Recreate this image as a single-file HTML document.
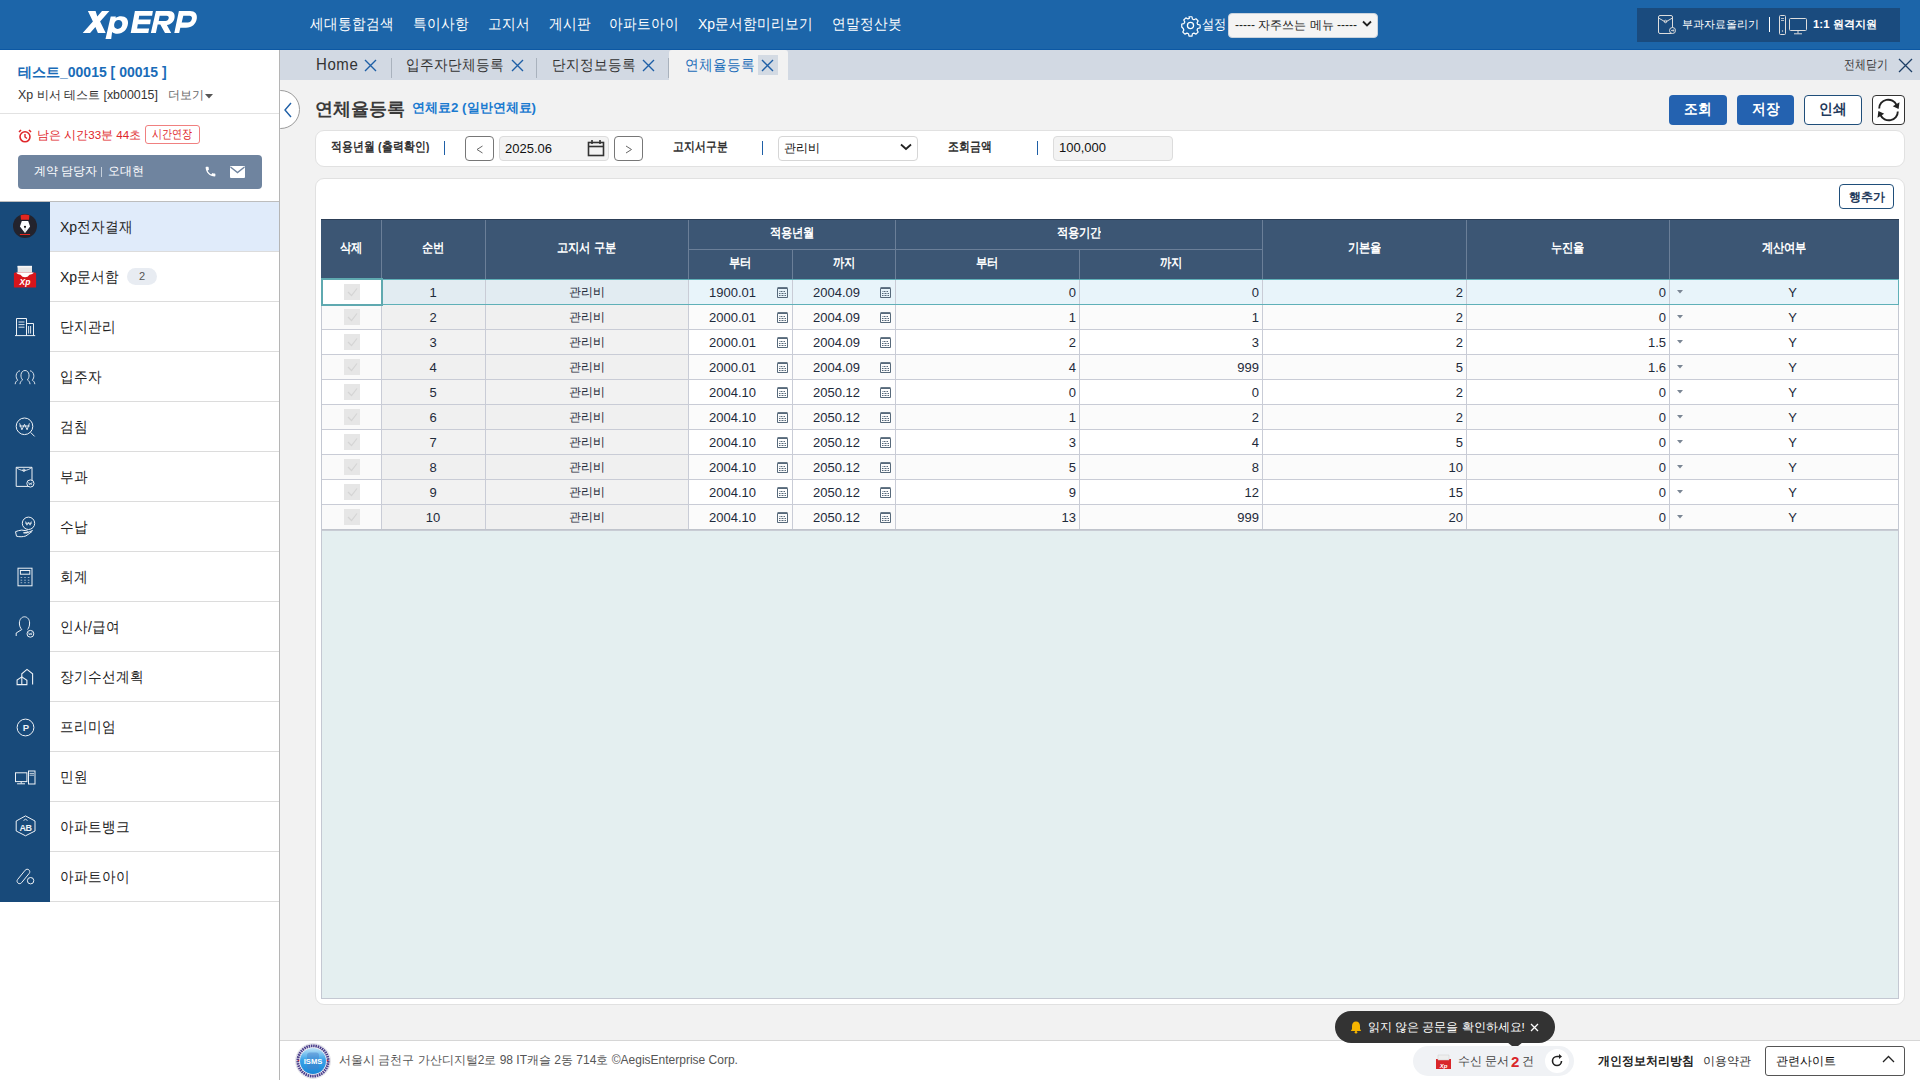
<!DOCTYPE html><html><head><meta charset="utf-8"><title>XpERP</title><style>
*{box-sizing:border-box;margin:0;padding:0}
html,body{width:1920px;height:1080px;overflow:hidden;background:#f2f2f2;font-family:"Liberation Sans", sans-serif;color:#222}
.a{position:absolute}
.t{position:absolute;white-space:nowrap;line-height:1}
.k{transform:scaleY(1.1);transform-origin:50% 90%}
.k2{transform:scaleY(1.2);transform-origin:50% 10%}
svg{position:absolute;overflow:visible}
</style></head><body>
<div class="a" style="left:0;top:0;width:1920px;height:50px;background:#1c65a9;border-bottom:1px solid #0c58a4"></div>
<svg style="left:0;top:0" width="280" height="50"><g fill="#fff" fill-rule="evenodd"><path d="M87.9,11 L95.6,11 L97.3,16.5 L102,11 L109.4,11 L100.1,21.5 L105.7,33 L97.9,33 L95.4,26.9 L90.1,33 L82.7,33 L92.9,21.5 Z"/><path d="M110.7,16.5 L115.9,16.5 L115.6,18 C117,16.8 119,16.3 121,16.3 C126,16.3 128.5,19.5 128,23.5 C127.3,29.5 123,33.8 117.5,33.8 C115,33.8 113.2,33 112.1,32 L111.2,39 L105.5,39 Z M118.5,20.1 C121,20.1 122.5,21.8 122.3,24.2 C122,27 120,28.9 117.7,28.9 C115.3,28.9 113.9,27.2 114.1,24.8 C114.4,22 116.2,20.1 118.5,20.1 Z"/><path d="M134.9,11 L152.9,11 L152.1,15.7 L139.2,15.7 L138.6,19.6 L150.8,19.6 L150.1,24.2 L137.8,24.2 L137.1,28.5 L149.1,28.5 L148.3,33 L130.7,33 Z"/><path d="M155.9,11 L169,11 C173.5,11 175.2,14 174.5,18 C173.8,22 171,24.5 166.9,25 L171.2,33 L165,33 L160.3,24.6 L157.7,24.6 L155.9,33 L150.85,33 Z M159.7,15.7 L166.5,15.7 C168.3,15.7 169,16.8 168.7,18.2 C168.4,19.8 167.2,20.9 165.5,20.9 L158.7,20.9 Z"/><path d="M178.9,11 L190,11 C195,11 197.5,14 196.8,18.5 C196,24 192,27.7 186,27.7 L180.3,27.7 L179.2,33 L174.3,33 Z M183.3,15.7 L189.5,15.7 C191.5,15.7 192.2,17 191.9,18.8 C191.5,21 190,22.6 187.8,22.6 L181.7,22.6 Z"/></g></svg>
<div class="t k" style="left:310px;top:17px;font-size:14px;color:#fff;width:83px">세대통합검색</div>
<div class="t k" style="left:413px;top:17px;font-size:14px;color:#fff;width:54px">특이사항</div>
<div class="t k" style="left:488px;top:17px;font-size:14px;color:#fff;width:41px">고지서</div>
<div class="t k" style="left:549px;top:17px;font-size:14px;color:#fff;width:41px">게시판</div>
<div class="t k" style="left:609px;top:17px;font-size:14px;color:#fff;width:69px">아파트아이</div>
<div class="t k" style="left:698px;top:17px;font-size:14px;color:#fff;width:114px">Xp문서함미리보기</div>
<div class="t k" style="left:832px;top:17px;font-size:14px;color:#fff;width:69px">연말정산봇</div>
<svg style="left:1180px;top:15px" width="21" height="21" viewBox="0 0 24 24"><path d="M12 8.5a3.5 3.5 0 1 0 0 7a3.5 3.5 0 1 0 0-7z" fill="none" stroke="#fff" stroke-width="1.5"/><path d="M10.3 2h3.4l.5 2.6 1.7.9 2.4-1.2 2.4 2.4-1.2 2.4.7 1.7 2.8.6v3.4l-2.8.6-.7 1.7 1.2 2.4-2.4 2.4-2.4-1.2-1.7.7-.5 2.8h-3.4l-.6-2.8-1.7-.7-2.4 1.2-2.4-2.4 1.2-2.4-.7-1.7L2 13.7v-3.4l2.6-.5.9-1.7-1.2-2.4 2.4-2.4 2.4 1.2 1.7-.9z" fill="none" stroke="#fff" stroke-width="1.4" stroke-linejoin="round"/></svg>
<div class="t" style="left:1202px;top:18px;font-size:12px;color:#fff;transform:scaleY(1.15)">설정</div>
<div class="a" style="left:1228px;top:13px;width:150px;height:25px;background:#f4f4f4;border-radius:4px;border:1px solid #c9d3de"></div>
<div class="t" style="left:1235px;top:19px;font-size:12px;color:#222">----- 자주쓰는 메뉴 -----</div>
<svg style="left:1362px;top:20px" width="10" height="8"><path d="M1 1.5 L5 5.5 L9 1.5" fill="none" stroke="#222" stroke-width="1.8"/></svg>
<div class="a" style="left:1637px;top:8px;width:263px;height:34px;background:#1a4b7e"></div>
<svg style="left:1658px;top:15px" width="20" height="20" viewBox="0 0 20 20"><rect x="0.5" y="0.5" width="14" height="18" rx="1.5" fill="none" stroke="#ddd" stroke-width="1"/><path d="M0.5 3 L7.5 7 L14.5 3" fill="none" stroke="#ddd" stroke-width="1"/><circle cx="7.5" cy="6.5" r="1.3" fill="none" stroke="#ddd" stroke-width=".8"/><circle cx="14.5" cy="15.5" r="3" fill="#1a4b7e" stroke="#ddd" stroke-width="1"/><path d="M13 15.5h3M15 14.3l1 1.2-1 1.2" fill="none" stroke="#ddd" stroke-width=".8"/></svg>
<div class="t" style="left:1682px;top:19px;font-size:11.2px;color:#fff">부과자료올리기</div>
<div class="a" style="left:1769px;top:17px;width:1px;height:15px;background:#fff"></div>
<svg style="left:1779px;top:15px" width="30" height="20" viewBox="0 0 30 20"><rect x="0.5" y="0.5" width="6" height="19" rx="1" fill="none" stroke="#ddd"/><path d="M2 3.5h3M2 5.5h3" stroke="#ddd" stroke-width=".8"/><circle cx="3.5" cy="16" r=".7" fill="#ddd"/><rect x="10.5" y="3.5" width="17" height="12" rx="1" fill="none" stroke="#ddd"/><path d="M19 15.5v3M15 18.8h8" stroke="#ddd"/></svg>
<div class="t" style="left:1813px;top:19px;font-size:11.4px;font-weight:bold;color:#fff">1:1 원격지원</div>
<div class="a" style="left:0;top:50px;width:280px;height:1030px;background:#fff;border-right:1px solid #b5b5b5"></div>
<div class="t" style="left:18px;top:65px;font-size:14px;font-weight:bold;color:#1a6cb8">테스트_00015 [ 00015 ]</div>
<div class="t" style="left:18px;top:89px;font-size:12.4px;color:#333">Xp 비서 테스트 [xb00015]</div>
<div class="t" style="left:168px;top:89px;font-size:12px;color:#666">더보기</div>
<svg style="left:205px;top:94px" width="8" height="5"><path d="M0 0h8L4 4.5z" fill="#555"/></svg>
<div class="a" style="left:0;top:113px;width:279px;height:1px;background:#e2e2e2"></div>
<svg style="left:18px;top:129px" width="14" height="14" viewBox="0 0 14 14"><circle cx="7" cy="7.8" r="5" fill="none" stroke="#e0262a" stroke-width="1.6"/><path d="M7 5v3l2 1.5" fill="none" stroke="#e0262a" stroke-width="1.4"/><path d="M1 3 L3 1 M13 3 L11 1" stroke="#e0262a" stroke-width="1.6"/></svg>
<div class="t" style="left:37px;top:129px;font-size:11.6px;color:#e0262a">남은 시간33분 44초</div>
<div class="a" style="left:145px;top:125px;width:55px;height:19px;border:1px solid #f08080;border-radius:3px;background:#fff"></div>
<div class="t" style="left:152px;top:129px;font-size:10.2px;color:#e0262a;transform:scaleY(1.2)">시간연장</div>
<div class="a" style="left:18px;top:155px;width:244px;height:34px;background:#6f849f;border-radius:4px"></div>
<div class="t" style="left:34px;top:165px;font-size:12px;color:#fff">계약 담당자</div>
<div class="a" style="left:101px;top:167px;width:1px;height:10px;background:#c5cfdb"></div>
<div class="t" style="left:108px;top:165px;font-size:12px;color:#fff">오대현</div>
<svg style="left:204px;top:165px" width="13" height="13" viewBox="0 0 24 24"><path d="M6.6 10.8c1.4 2.8 3.8 5.1 6.6 6.6l2.2-2.2c.3-.3.7-.4 1-.2 1.1.4 2.3.6 3.6.6.6 0 1 .4 1 1V20c0 .6-.4 1-1 1C10.6 21 3 13.4 3 4c0-.6.4-1 1-1h3.5c.6 0 1 .4 1 1 0 1.3.2 2.5.6 3.6.1.3 0 .7-.2 1z" fill="#fff"/></svg>
<svg style="left:230px;top:166px" width="15" height="12" viewBox="0 0 15 12"><rect x="0" y="0" width="15" height="12" rx="1" fill="#fff"/><path d="M0.5 1 L7.5 6.5 L14.5 1" fill="none" stroke="#6f849f" stroke-width="1.4"/></svg>
<div class="a" style="left:0;top:201px;width:279px;height:1px;background:#bdbdbd"></div>
<div class="a" style="left:0;top:202px;width:50px;height:700px;background:#184a7a"></div>
<div class="a" style="left:50px;top:202px;width:229px;height:50px;background:#e0ebfa;border-bottom:1px solid #dcdcdc"></div>
<div class="t k" style="left:60px;top:220px;font-size:14px;color:#222">Xp전자결재</div>
<div class="a" style="left:50px;top:252px;width:229px;height:50px;background:#fff;border-bottom:1px solid #dcdcdc"></div>
<div class="t k" style="left:60px;top:270px;font-size:14px;color:#222">Xp문서함</div>
<div class="a" style="left:50px;top:302px;width:229px;height:50px;background:#fff;border-bottom:1px solid #dcdcdc"></div>
<div class="t k" style="left:60px;top:320px;font-size:14px;color:#222">단지관리</div>
<div class="a" style="left:50px;top:352px;width:229px;height:50px;background:#fff;border-bottom:1px solid #dcdcdc"></div>
<div class="t k" style="left:60px;top:370px;font-size:14px;color:#222">입주자</div>
<div class="a" style="left:50px;top:402px;width:229px;height:50px;background:#fff;border-bottom:1px solid #dcdcdc"></div>
<div class="t k" style="left:60px;top:420px;font-size:14px;color:#222">검침</div>
<div class="a" style="left:50px;top:452px;width:229px;height:50px;background:#fff;border-bottom:1px solid #dcdcdc"></div>
<div class="t k" style="left:60px;top:470px;font-size:14px;color:#222">부과</div>
<div class="a" style="left:50px;top:502px;width:229px;height:50px;background:#fff;border-bottom:1px solid #dcdcdc"></div>
<div class="t k" style="left:60px;top:520px;font-size:14px;color:#222">수납</div>
<div class="a" style="left:50px;top:552px;width:229px;height:50px;background:#fff;border-bottom:1px solid #dcdcdc"></div>
<div class="t k" style="left:60px;top:570px;font-size:14px;color:#222">회계</div>
<div class="a" style="left:50px;top:602px;width:229px;height:50px;background:#fff;border-bottom:1px solid #dcdcdc"></div>
<div class="t k" style="left:60px;top:620px;font-size:14px;color:#222">인사/급여</div>
<div class="a" style="left:50px;top:652px;width:229px;height:50px;background:#fff;border-bottom:1px solid #dcdcdc"></div>
<div class="t k" style="left:60px;top:670px;font-size:14px;color:#222">장기수선계획</div>
<div class="a" style="left:50px;top:702px;width:229px;height:50px;background:#fff;border-bottom:1px solid #dcdcdc"></div>
<div class="t k" style="left:60px;top:720px;font-size:14px;color:#222">프리미엄</div>
<div class="a" style="left:50px;top:752px;width:229px;height:50px;background:#fff;border-bottom:1px solid #dcdcdc"></div>
<div class="t k" style="left:60px;top:770px;font-size:14px;color:#222">민원</div>
<div class="a" style="left:50px;top:802px;width:229px;height:50px;background:#fff;border-bottom:1px solid #dcdcdc"></div>
<div class="t k" style="left:60px;top:820px;font-size:14px;color:#222">아파트뱅크</div>
<div class="a" style="left:50px;top:852px;width:229px;height:50px;background:#fff;border-bottom:1px solid #dcdcdc"></div>
<div class="t k" style="left:60px;top:870px;font-size:14px;color:#222">아파트아이</div>
<div class="t" style="left:127px;top:268px;width:30px;height:17px;background:#e8ecf2;border-radius:9px;font-size:11px;color:#555;text-align:center;line-height:17px">2</div>
<svg style="left:0;top:202px" width="50" height="50"><circle cx="25" cy="23.9" r="12" fill="#23232d"/><path d="M20.6 13.2 Q25 11.6 29.4 13.2 L29 17.8 L21 17.8z" fill="#e3261f"/><path d="M21.8 19h6.4l1.9 5.5-5.1 6.5-5.1-6.5z" fill="#fff"/><path d="M25 25v5.5" stroke="#bbb" stroke-width=".8"/><circle cx="25" cy="24.8" r="1.1" fill="#111"/><rect x="19.9" y="32" width="10.2" height="1" fill="#e3261f"/></svg>
<svg style="left:0;top:252px" width="50" height="50"><rect x="17.6" y="13.9" width="14.4" height="7" fill="#e6e6e6"/><rect x="17.6" y="13.9" width="14.4" height="1.6" fill="#f6f6f6"/><path d="M13.9 21.5 Q14 20.4 15.5 20.4 H34.5 Q36 20.4 36.1 21.5 V35 Q36.1 35.6 35.5 35.6 H14.5 Q13.9 35.6 13.9 35z" fill="#d7151b"/><path d="M16.5 20.4 H33.5 V21 Q33 22.2 29.5 22.8 Q27.8 25.3 25 25.3 Q22.2 25.3 20.5 22.8 Q17 22.2 16.5 21z" fill="#fff"/><text x="25" y="33" font-size="8.5" font-weight="bold" font-style="italic" fill="#fff" text-anchor="middle" font-family="Liberation Sans">Xp</text></svg>
<svg style="left:0;top:302px" width="50" height="50"><g fill="none" stroke="#eef2f6" stroke-width="1"><path d="M16.5 33.5V16.5h10v17"/><path d="M26.5 21.5h7v12"/><path d="M15 33.6h20.2"/><path d="M18.5 20h6M18.5 22.6h6M18.5 25.2h6" stroke-width=".9"/><path d="M28.6 24v7.6M30.6 24v7.6" stroke-width=".9"/></g></svg>
<svg style="left:0;top:352px" width="50" height="50"><g fill="none" stroke="#eef2f6" stroke-width=".9"><path d="M20 32.2c0-2 1.3-3.5 2.6-4.3-1.2-1.3-1.8-3.2-1.6-5.2.3-2.6 1.9-4.2 4-4.2s3.7 1.6 4 4.2c.2 2-.4 3.9-1.6 5.2 1.3.8 2.6 2.3 2.6 4.3"/><path d="M15.2 32.2c0-2 1.2-3.2 2.5-4-1.1-1.3-1.7-3-1.5-5 .3-2.4 1.8-4.2 3.8-4.4"/><path d="M34.8 32.2c0-2-1.2-3.2-2.5-4 1.1-1.3 1.7-3 1.5-5-.3-2.4-1.8-4.2-3.8-4.4"/></g></svg>
<svg style="left:0;top:402px" width="50" height="50"><g fill="none" stroke="#eef2f6" stroke-width="1"><circle cx="24.5" cy="24.3" r="8.3"/><path d="M30.6 30.4l4 4"/><path d="M19.6 21.3l2.3 6.5 2.6-5.5 2.6 5.5 2.3-6.5M19.3 24h10.4" stroke-width=".9"/></g></svg>
<svg style="left:0;top:452px" width="50" height="50"><g fill="none" stroke="#eef2f6" stroke-width="1"><path d="M16.2 15.3h15.8v19.1h-15.8z"/><path d="M16.2 15.5c2 1.5 4.5 3 7.7 3s5.8-1.5 8.1-3" stroke-width=".9"/><circle cx="23.9" cy="18.3" r="1.2" stroke-width=".8"/><circle cx="30.4" cy="31.5" r="3.6" fill="#174a7a"/><path d="M28.6 30.2l.8 2.6.9-1.8.9 1.8.8-2.6" stroke-width=".7"/></g></svg>
<svg style="left:0;top:502px" width="50" height="50"><g fill="none" stroke="#eef2f6" stroke-width="1"><circle cx="28.5" cy="21.3" r="6.2"/><path d="M25.6 19.5l1.3 3.7 1.6-2.8 1.6 2.8 1.3-3.7M25.3 21.2h6.4" stroke-width=".8"/><path d="M15.5 29.7c1.8-.8 4-1.4 6.2-1.6l5.5.8c1 .2 1 1.4 0 1.6l-3.7.3 3.4.2 5.8-2.6M15.5 29.7l1 4.5c3 .8 6.2.8 9.5-.3l6.2-4.5"/></g></svg>
<svg style="left:0;top:552px" width="50" height="50"><g fill="none" stroke="#eef2f6" stroke-width="1"><rect x="18" y="16.2" width="14" height="17.6"/><rect x="20.4" y="18.5" width="9.4" height="3.7"/></g><g fill="#9fb3c8"><rect x="20.6" y="25" width="1.6" height="1"/><rect x="24.2" y="25" width="1.6" height="1"/><rect x="27.8" y="25" width="1.6" height="1"/><rect x="20.6" y="27.7" width="1.6" height="1"/><rect x="24.2" y="27.7" width="1.6" height="1"/><rect x="27.8" y="27.7" width="1.6" height="1"/><rect x="20.6" y="30.2" width="1.6" height="1"/><rect x="24.2" y="30.2" width="1.6" height="1"/><rect x="27.8" y="30.2" width="1.6" height="1"/></g></svg>
<svg style="left:0;top:602px" width="50" height="50"><g fill="none" stroke="#eef2f6" stroke-width="1"><path d="M16.2 34v-3l5.6-3.5c-1.5-1.5-2.4-3.5-2.4-6.5 0-3.5 2.2-6.2 5.1-6.2s5.1 2.7 5.1 6.2c0 2.8-.8 5-2 6.5"/><circle cx="30.4" cy="31.8" r="3.4"/><path d="M28.6 30.5l.8 2.5.9-1.7.9 1.7.8-2.5" stroke-width=".7"/></g></svg>
<svg style="left:0;top:652px" width="50" height="50"><g fill="none" stroke="#eef2f6" stroke-width="1.1"><path d="M32.6 32.6V21.8L27 17.4l-5.2 4.4v3.6"/><path d="M17.1 32.6v-4.6l4.7-3.2 5.1 3.4v4.4z"/><path d="M21.8 25v7.6"/></g></svg>
<svg style="left:0;top:702px" width="50" height="50"><circle cx="25.5" cy="25.5" r="8.4" fill="none" stroke="#eef2f6" stroke-width="1"/><text x="26" y="29.3" font-size="9.5" font-weight="bold" fill="#eef2f6" text-anchor="middle" font-family="Liberation Sans">P</text></svg>
<svg style="left:0;top:752px" width="50" height="50"><g fill="none" stroke="#eef2f6" stroke-width="1"><rect x="15.5" y="20.8" width="11.4" height="8.8"/><path d="M21.2 29.6v2M17.1 31.8h7.9"/><rect x="28.5" y="19" width="6.5" height="13"/><path d="M29.5 21.4h4.5M29.5 23.2h4.5" stroke-width=".8"/></g></svg>
<svg style="left:0;top:802px" width="50" height="50"><g fill="none" stroke="#eef2f6" stroke-width="1"><path d="M25.5 13.9l9.5 5.1v10l-9.5 4.8-9.3-4.8v-10z"/><path d="M23.5 18.5l2-1.3 2 1.3" stroke-width=".9"/></g><text x="25.5" y="29" font-size="9" font-weight="bold" fill="#eef2f6" text-anchor="middle" font-family="Liberation Sans" letter-spacing="-.5">AB</text></svg>
<svg style="left:0;top:852px" width="50" height="50"><g fill="none" stroke="#eef2f6" stroke-width="1"><path d="M17.6 27.5l7.6-9.3c.9-1.1 2.5-1.3 3.6-.4 1.1.9 1.3 2.5.4 3.6l-7.6 9.3c-.9 1.1-2.5 1.3-3.6.4-1.1-.9-1.3-2.5-.4-3.6z"/><circle cx="30.6" cy="28.7" r="3.2"/></g></svg>
<div class="a" style="left:280px;top:50px;width:1640px;height:30px;background:#d2d9e3"></div>
<div class="t k" style="left:316px;top:58px;font-size:14px;color:#333;font-size:15px;letter-spacing:.6px;top:57px">Home</div>
<svg style="left:364px;top:59px" width="13" height="13"><path d="M1 1L12 12M12 1L1 12" stroke="#1e5fa6" stroke-width="1.4"/></svg>
<div class="a" style="left:391px;top:58px;width:1px;height:20px;background:#a9b2bd"></div>
<div class="t k" style="left:406px;top:58px;font-size:14px;color:#333">입주자단체등록</div>
<svg style="left:511px;top:59px" width="13" height="13"><path d="M1 1L12 12M12 1L1 12" stroke="#1e5fa6" stroke-width="1.4"/></svg>
<div class="a" style="left:536px;top:58px;width:1px;height:20px;background:#a9b2bd"></div>
<div class="t k" style="left:552px;top:58px;font-size:14px;color:#333">단지정보등록</div>
<svg style="left:642px;top:59px" width="13" height="13"><path d="M1 1L12 12M12 1L1 12" stroke="#1e5fa6" stroke-width="1.4"/></svg>
<div class="a" style="left:668px;top:58px;width:1px;height:20px;background:#a9b2bd"></div>
<div class="a" style="left:669px;top:50px;width:119px;height:30px;background:#f2f2f2;border-radius:3px 3px 0 0"></div>
<div class="t k" style="left:685px;top:58px;font-size:14px;color:#1a6cb8">연체율등록</div>
<div class="a" style="left:758px;top:55px;width:20px;height:20px;background:#d3dae3"></div>
<svg style="left:761px;top:59px" width="13" height="13"><path d="M1 1L12 12M12 1L1 12" stroke="#1e5fa6" stroke-width="1.4"/></svg>
<div class="t" style="left:1844px;top:59px;font-size:11px;color:#333;transform:scaleY(1.2)">전체닫기</div>
<svg style="left:1898px;top:58px" width="15" height="15"><path d="M1 1L14 14M14 1L1 14" stroke="#1e3f66" stroke-width="1.3"/></svg>
<div class="a" style="left:261px;top:90px;width:39px;height:39px;border-radius:50%;border:1px solid #9a9a9a;background:#fff;clip-path:inset(0 0 0 19px)"></div>
<svg style="left:283px;top:102px" width="10" height="16"><path d="M8 1L2 8l6 7" fill="none" stroke="#1e5fa6" stroke-width="1.4"/></svg>
<div class="t" style="left:315px;top:100px;font-size:18px;font-weight:bold;color:#3a3a3a">연체율등록</div>
<div class="t" style="left:412px;top:101px;font-size:13.3px;font-weight:bold;color:#1a7ad0">연체료2 (일반연체료)</div>
<div class="a" style="left:1669px;top:95px;width:58px;height:30px;background:#2462b0;border-radius:4px"></div>
<div class="t" style="left:1669px;top:103px;width:58px;text-align:center;font-size:13.5px;font-weight:bold;color:#fff;transform:scaleY(1.1)">조회</div>
<div class="a" style="left:1737px;top:95px;width:57px;height:30px;background:#2462b0;border-radius:4px"></div>
<div class="t" style="left:1737px;top:103px;width:57px;text-align:center;font-size:13.5px;font-weight:bold;color:#fff;transform:scaleY(1.1)">저장</div>
<div class="a" style="left:1804px;top:95px;width:58px;height:30px;background:#fff;border:1px solid #1f4e7a;border-radius:4px"></div>
<div class="t" style="left:1804px;top:103px;width:58px;text-align:center;font-size:13.5px;font-weight:bold;color:#1f3a5c;transform:scaleY(1.1)">인쇄</div>
<div class="a" style="left:1872px;top:95px;width:33px;height:30px;background:#fff;border:1px solid #333;border-radius:4px"></div>
<svg style="left:1876px;top:99px" width="25" height="22" viewBox="0 0 25 22"><path d="M3.2 9.5A9 8.6 0 0 1 20.5 6" fill="none" stroke="#222" stroke-width="1.9"/><path d="M21.8 12.5A9 8.6 0 0 1 4.5 16" fill="none" stroke="#222" stroke-width="1.9"/><path d="M23.5 3.2L22.6 10 16.8 7.2z" fill="#222"/><path d="M1.5 18.8L2.4 12 8.2 14.8z" fill="#222"/></svg>
<div class="a" style="left:315px;top:130px;width:1590px;height:37px;background:#fff;border:1px solid #e1e1e1;border-radius:9px"></div>
<div class="t k2" style="left:331px;top:140px;font-size:11px;font-weight:bold;color:#333">적용년월 (출력확인)</div>
<div class="a" style="left:444px;top:141px;width:1px;height:14px;background:#1e5fa6"></div>
<div class="a" style="left:762px;top:141px;width:1px;height:14px;background:#1e5fa6"></div>
<div class="a" style="left:1037px;top:141px;width:1px;height:14px;background:#1e5fa6"></div>
<div class="a" style="left:465px;top:136px;width:29px;height:25px;background:#fff;border:1px solid #777;border-radius:4px"></div>
<svg style="left:476px;top:145px" width="8" height="9"><path d="M6.5 1L1 4.5l5.5 3.5" fill="none" stroke="#666" stroke-width="1"/></svg>
<div class="a" style="left:499px;top:136px;width:110px;height:25px;background:#f3f3f3;border:1px solid #dcdcdc;border-radius:4px"></div>
<div class="t" style="left:505px;top:142px;font-size:13px;color:#111">2025.06</div>
<svg style="left:587px;top:139px" width="18" height="18" viewBox="0 0 18 18"><rect x="1.5" y="3.5" width="15" height="13" fill="none" stroke="#333" stroke-width="1.6"/><path d="M1.5 7.5h15" stroke="#333" stroke-width="1.6"/><path d="M5 1v4M13 1v4" stroke="#333" stroke-width="1.6"/></svg>
<div class="a" style="left:614px;top:136px;width:29px;height:25px;background:#fff;border:1px solid #777;border-radius:4px"></div>
<svg style="left:625px;top:145px" width="8" height="9"><path d="M1 1l5.5 3.5L1 8" fill="none" stroke="#666" stroke-width="1"/></svg>
<div class="t k2" style="left:673px;top:140px;font-size:11.2px;font-weight:bold;color:#333">고지서구분</div>
<div class="a" style="left:778px;top:136px;width:140px;height:25px;background:#fff;border:1px solid #d6d6d6;border-radius:4px"></div>
<div class="t" style="left:784px;top:142px;font-size:12px;color:#111">관리비</div>
<svg style="left:900px;top:143px" width="12" height="8"><path d="M1 1.5l5 4.5 5-4.5" fill="none" stroke="#222" stroke-width="1.8"/></svg>
<div class="t k2" style="left:948px;top:140px;font-size:11.2px;font-weight:bold;color:#333">조회금액</div>
<div class="a" style="left:1053px;top:136px;width:120px;height:25px;background:#f3f3f3;border:1px solid #dcdcdc;border-radius:4px"></div>
<div class="t" style="left:1059px;top:141px;font-size:13px;color:#111">100,000</div>
<div class="a" style="left:315px;top:178px;width:1590px;height:827px;background:#fff;border:1px solid #e1e1e1;border-radius:9px"></div>
<div class="a" style="left:1839px;top:184px;width:55px;height:25px;background:#fff;border:1px solid #1f4e7a;border-radius:4px"></div>
<div class="t" style="left:1839px;top:191px;width:55px;text-align:center;font-size:12px;font-weight:bold;color:#1f3a5c">행추가</div>
<div class="a" style="left:321px;top:219px;width:1578px;height:780px;background:#e4eff0;border:1px solid #c4c8d2"></div>
<div class="a" style="left:321px;top:219px;width:1578px;height:60px;background:#3c5674;border-top:1px solid #2c3e56"></div>
<div class="a" style="left:381px;top:220px;width:1px;height:59px;background:#6b7f98"></div>
<div class="a" style="left:485px;top:220px;width:1px;height:59px;background:#6b7f98"></div>
<div class="a" style="left:688px;top:220px;width:1px;height:59px;background:#6b7f98"></div>
<div class="a" style="left:895px;top:220px;width:1px;height:59px;background:#6b7f98"></div>
<div class="a" style="left:1262px;top:220px;width:1px;height:59px;background:#6b7f98"></div>
<div class="a" style="left:1466px;top:220px;width:1px;height:59px;background:#6b7f98"></div>
<div class="a" style="left:1669px;top:220px;width:1px;height:59px;background:#6b7f98"></div>
<div class="a" style="left:792px;top:249px;width:1px;height:30px;background:#6b7f98"></div>
<div class="a" style="left:1079px;top:249px;width:1px;height:30px;background:#6b7f98"></div>
<div class="a" style="left:688px;top:249px;width:574px;height:1px;background:#6b7f98"></div>
<div class="t" style="left:321px;top:243px;width:60px;text-align:center;font-size:11.4px;font-weight:bold;color:#fff;transform:scaleY(1.15)">삭제</div>
<div class="t" style="left:381px;top:243px;width:104px;text-align:center;font-size:11.4px;font-weight:bold;color:#fff;transform:scaleY(1.15)">순번</div>
<div class="t" style="left:485px;top:243px;width:203px;text-align:center;font-size:11.4px;font-weight:bold;color:#fff;transform:scaleY(1.15)">고지서 구분</div>
<div class="t" style="left:688px;top:228px;width:207px;text-align:center;font-size:11.4px;font-weight:bold;color:#fff;transform:scaleY(1.15)">적용년월</div>
<div class="t" style="left:688px;top:258px;width:104px;text-align:center;font-size:11.4px;font-weight:bold;color:#fff;transform:scaleY(1.15)">부터</div>
<div class="t" style="left:792px;top:258px;width:103px;text-align:center;font-size:11.4px;font-weight:bold;color:#fff;transform:scaleY(1.15)">까지</div>
<div class="t" style="left:895px;top:228px;width:367px;text-align:center;font-size:11.4px;font-weight:bold;color:#fff;transform:scaleY(1.15)">적용기간</div>
<div class="t" style="left:895px;top:258px;width:184px;text-align:center;font-size:11.4px;font-weight:bold;color:#fff;transform:scaleY(1.15)">부터</div>
<div class="t" style="left:1079px;top:258px;width:183px;text-align:center;font-size:11.4px;font-weight:bold;color:#fff;transform:scaleY(1.15)">까지</div>
<div class="t" style="left:1262px;top:243px;width:204px;text-align:center;font-size:11.4px;font-weight:bold;color:#fff;transform:scaleY(1.15)">기본율</div>
<div class="t" style="left:1466px;top:243px;width:203px;text-align:center;font-size:11.4px;font-weight:bold;color:#fff;transform:scaleY(1.15)">누진율</div>
<div class="t" style="left:1669px;top:243px;width:229px;text-align:center;font-size:11.4px;font-weight:bold;color:#fff;transform:scaleY(1.15)">계산여부</div>
<div class="a" style="left:322px;top:280px;width:59px;height:24px;background:#ffffff"></div>
<div class="a" style="left:382px;top:280px;width:306px;height:24px;background:#e2ecf2"></div>
<div class="a" style="left:689px;top:280px;width:1209px;height:24px;background:#e8f4fa"></div>
<div class="a" style="left:322px;top:304px;width:1576px;height:1px;background:#c9ccd6"></div>
<div class="a" style="left:322px;top:305px;width:59px;height:24px;background:#fafafa"></div>
<div class="a" style="left:382px;top:305px;width:306px;height:24px;background:#f0f0f0"></div>
<div class="a" style="left:689px;top:305px;width:1209px;height:24px;background:#fbfbfb"></div>
<div class="a" style="left:322px;top:329px;width:1576px;height:1px;background:#c9ccd6"></div>
<div class="a" style="left:322px;top:330px;width:59px;height:24px;background:#ffffff"></div>
<div class="a" style="left:382px;top:330px;width:306px;height:24px;background:#f2f2f2"></div>
<div class="a" style="left:689px;top:330px;width:1209px;height:24px;background:#ffffff"></div>
<div class="a" style="left:322px;top:354px;width:1576px;height:1px;background:#c9ccd6"></div>
<div class="a" style="left:322px;top:355px;width:59px;height:24px;background:#fafafa"></div>
<div class="a" style="left:382px;top:355px;width:306px;height:24px;background:#f0f0f0"></div>
<div class="a" style="left:689px;top:355px;width:1209px;height:24px;background:#fbfbfb"></div>
<div class="a" style="left:322px;top:379px;width:1576px;height:1px;background:#c9ccd6"></div>
<div class="a" style="left:322px;top:380px;width:59px;height:24px;background:#ffffff"></div>
<div class="a" style="left:382px;top:380px;width:306px;height:24px;background:#f2f2f2"></div>
<div class="a" style="left:689px;top:380px;width:1209px;height:24px;background:#ffffff"></div>
<div class="a" style="left:322px;top:404px;width:1576px;height:1px;background:#c9ccd6"></div>
<div class="a" style="left:322px;top:405px;width:59px;height:24px;background:#fafafa"></div>
<div class="a" style="left:382px;top:405px;width:306px;height:24px;background:#f0f0f0"></div>
<div class="a" style="left:689px;top:405px;width:1209px;height:24px;background:#fbfbfb"></div>
<div class="a" style="left:322px;top:429px;width:1576px;height:1px;background:#c9ccd6"></div>
<div class="a" style="left:322px;top:430px;width:59px;height:24px;background:#ffffff"></div>
<div class="a" style="left:382px;top:430px;width:306px;height:24px;background:#f2f2f2"></div>
<div class="a" style="left:689px;top:430px;width:1209px;height:24px;background:#ffffff"></div>
<div class="a" style="left:322px;top:454px;width:1576px;height:1px;background:#c9ccd6"></div>
<div class="a" style="left:322px;top:455px;width:59px;height:24px;background:#fafafa"></div>
<div class="a" style="left:382px;top:455px;width:306px;height:24px;background:#f0f0f0"></div>
<div class="a" style="left:689px;top:455px;width:1209px;height:24px;background:#fbfbfb"></div>
<div class="a" style="left:322px;top:479px;width:1576px;height:1px;background:#c9ccd6"></div>
<div class="a" style="left:322px;top:480px;width:59px;height:24px;background:#ffffff"></div>
<div class="a" style="left:382px;top:480px;width:306px;height:24px;background:#f2f2f2"></div>
<div class="a" style="left:689px;top:480px;width:1209px;height:24px;background:#ffffff"></div>
<div class="a" style="left:322px;top:504px;width:1576px;height:1px;background:#c9ccd6"></div>
<div class="a" style="left:322px;top:505px;width:59px;height:24px;background:#fafafa"></div>
<div class="a" style="left:382px;top:505px;width:306px;height:24px;background:#f0f0f0"></div>
<div class="a" style="left:689px;top:505px;width:1209px;height:24px;background:#fbfbfb"></div>
<div class="a" style="left:322px;top:529px;width:1576px;height:1px;background:#c9ccd6"></div>
<svg style="left:344px;top:284px" width="16" height="16"><rect width="16" height="16" fill="#e6e6e6"/><path d="M4 8l3.5 3.5L13 4.5" fill="none" stroke="#d4d4d4" stroke-width="1.2"/></svg>
<div class="t" style="left:381px;top:286px;width:104px;text-align:center;font-size:13px;color:#1e2a3a">1</div>
<div class="t" style="left:485px;top:286px;width:203px;text-align:center;font-size:12px;color:#1e2a3a">관리비</div>
<div class="t" style="left:688px;top:286px;width:68px;text-align:right;font-size:13px;color:#1e2a3a">1900.01</div>
<svg style="left:776px;top:286px" width="13" height="13" viewBox="0 0 13 13"><path d="M1.5 2.5h10v9h-10z" fill="none" stroke="#56697a" stroke-width="1"/><path d="M1.5 1.8h10" stroke="#56697a" stroke-width="1.4"/><path d="M3.5 5.5h6M3 7.5h7M3 9.5h7" stroke="#56697a" stroke-width="1.1" stroke-dasharray="1 .5"/></svg>
<div class="t" style="left:792px;top:286px;width:68px;text-align:right;font-size:13px;color:#1e2a3a">2004.09</div>
<svg style="left:879px;top:286px" width="13" height="13" viewBox="0 0 13 13"><path d="M1.5 2.5h10v9h-10z" fill="none" stroke="#56697a" stroke-width="1"/><path d="M1.5 1.8h10" stroke="#56697a" stroke-width="1.4"/><path d="M3.5 5.5h6M3 7.5h7M3 9.5h7" stroke="#56697a" stroke-width="1.1" stroke-dasharray="1 .5"/></svg>
<div class="t" style="left:895px;top:286px;width:181px;text-align:right;font-size:13px;color:#1e2a3a">0</div>
<div class="t" style="left:1079px;top:286px;width:180px;text-align:right;font-size:13px;color:#1e2a3a">0</div>
<div class="t" style="left:1262px;top:286px;width:201px;text-align:right;font-size:13px;color:#1e2a3a">2</div>
<div class="t" style="left:1466px;top:286px;width:200px;text-align:right;font-size:13px;color:#1e2a3a">0</div>
<svg style="left:1677px;top:290px" width="6" height="4"><path d="M0 0h6L3 3.5z" fill="#7a8694"/></svg>
<div class="t" style="left:1687px;top:286px;width:211px;text-align:center;font-size:13px;color:#1e2a3a">Y</div>
<svg style="left:344px;top:309px" width="16" height="16"><rect width="16" height="16" fill="#e6e6e6"/><path d="M4 8l3.5 3.5L13 4.5" fill="none" stroke="#d4d4d4" stroke-width="1.2"/></svg>
<div class="t" style="left:381px;top:311px;width:104px;text-align:center;font-size:13px;color:#1e2a3a">2</div>
<div class="t" style="left:485px;top:311px;width:203px;text-align:center;font-size:12px;color:#1e2a3a">관리비</div>
<div class="t" style="left:688px;top:311px;width:68px;text-align:right;font-size:13px;color:#1e2a3a">2000.01</div>
<svg style="left:776px;top:311px" width="13" height="13" viewBox="0 0 13 13"><path d="M1.5 2.5h10v9h-10z" fill="none" stroke="#56697a" stroke-width="1"/><path d="M1.5 1.8h10" stroke="#56697a" stroke-width="1.4"/><path d="M3.5 5.5h6M3 7.5h7M3 9.5h7" stroke="#56697a" stroke-width="1.1" stroke-dasharray="1 .5"/></svg>
<div class="t" style="left:792px;top:311px;width:68px;text-align:right;font-size:13px;color:#1e2a3a">2004.09</div>
<svg style="left:879px;top:311px" width="13" height="13" viewBox="0 0 13 13"><path d="M1.5 2.5h10v9h-10z" fill="none" stroke="#56697a" stroke-width="1"/><path d="M1.5 1.8h10" stroke="#56697a" stroke-width="1.4"/><path d="M3.5 5.5h6M3 7.5h7M3 9.5h7" stroke="#56697a" stroke-width="1.1" stroke-dasharray="1 .5"/></svg>
<div class="t" style="left:895px;top:311px;width:181px;text-align:right;font-size:13px;color:#1e2a3a">1</div>
<div class="t" style="left:1079px;top:311px;width:180px;text-align:right;font-size:13px;color:#1e2a3a">1</div>
<div class="t" style="left:1262px;top:311px;width:201px;text-align:right;font-size:13px;color:#1e2a3a">2</div>
<div class="t" style="left:1466px;top:311px;width:200px;text-align:right;font-size:13px;color:#1e2a3a">0</div>
<svg style="left:1677px;top:315px" width="6" height="4"><path d="M0 0h6L3 3.5z" fill="#7a8694"/></svg>
<div class="t" style="left:1687px;top:311px;width:211px;text-align:center;font-size:13px;color:#1e2a3a">Y</div>
<svg style="left:344px;top:334px" width="16" height="16"><rect width="16" height="16" fill="#e6e6e6"/><path d="M4 8l3.5 3.5L13 4.5" fill="none" stroke="#d4d4d4" stroke-width="1.2"/></svg>
<div class="t" style="left:381px;top:336px;width:104px;text-align:center;font-size:13px;color:#1e2a3a">3</div>
<div class="t" style="left:485px;top:336px;width:203px;text-align:center;font-size:12px;color:#1e2a3a">관리비</div>
<div class="t" style="left:688px;top:336px;width:68px;text-align:right;font-size:13px;color:#1e2a3a">2000.01</div>
<svg style="left:776px;top:336px" width="13" height="13" viewBox="0 0 13 13"><path d="M1.5 2.5h10v9h-10z" fill="none" stroke="#56697a" stroke-width="1"/><path d="M1.5 1.8h10" stroke="#56697a" stroke-width="1.4"/><path d="M3.5 5.5h6M3 7.5h7M3 9.5h7" stroke="#56697a" stroke-width="1.1" stroke-dasharray="1 .5"/></svg>
<div class="t" style="left:792px;top:336px;width:68px;text-align:right;font-size:13px;color:#1e2a3a">2004.09</div>
<svg style="left:879px;top:336px" width="13" height="13" viewBox="0 0 13 13"><path d="M1.5 2.5h10v9h-10z" fill="none" stroke="#56697a" stroke-width="1"/><path d="M1.5 1.8h10" stroke="#56697a" stroke-width="1.4"/><path d="M3.5 5.5h6M3 7.5h7M3 9.5h7" stroke="#56697a" stroke-width="1.1" stroke-dasharray="1 .5"/></svg>
<div class="t" style="left:895px;top:336px;width:181px;text-align:right;font-size:13px;color:#1e2a3a">2</div>
<div class="t" style="left:1079px;top:336px;width:180px;text-align:right;font-size:13px;color:#1e2a3a">3</div>
<div class="t" style="left:1262px;top:336px;width:201px;text-align:right;font-size:13px;color:#1e2a3a">2</div>
<div class="t" style="left:1466px;top:336px;width:200px;text-align:right;font-size:13px;color:#1e2a3a">1.5</div>
<svg style="left:1677px;top:340px" width="6" height="4"><path d="M0 0h6L3 3.5z" fill="#7a8694"/></svg>
<div class="t" style="left:1687px;top:336px;width:211px;text-align:center;font-size:13px;color:#1e2a3a">Y</div>
<svg style="left:344px;top:359px" width="16" height="16"><rect width="16" height="16" fill="#e6e6e6"/><path d="M4 8l3.5 3.5L13 4.5" fill="none" stroke="#d4d4d4" stroke-width="1.2"/></svg>
<div class="t" style="left:381px;top:361px;width:104px;text-align:center;font-size:13px;color:#1e2a3a">4</div>
<div class="t" style="left:485px;top:361px;width:203px;text-align:center;font-size:12px;color:#1e2a3a">관리비</div>
<div class="t" style="left:688px;top:361px;width:68px;text-align:right;font-size:13px;color:#1e2a3a">2000.01</div>
<svg style="left:776px;top:361px" width="13" height="13" viewBox="0 0 13 13"><path d="M1.5 2.5h10v9h-10z" fill="none" stroke="#56697a" stroke-width="1"/><path d="M1.5 1.8h10" stroke="#56697a" stroke-width="1.4"/><path d="M3.5 5.5h6M3 7.5h7M3 9.5h7" stroke="#56697a" stroke-width="1.1" stroke-dasharray="1 .5"/></svg>
<div class="t" style="left:792px;top:361px;width:68px;text-align:right;font-size:13px;color:#1e2a3a">2004.09</div>
<svg style="left:879px;top:361px" width="13" height="13" viewBox="0 0 13 13"><path d="M1.5 2.5h10v9h-10z" fill="none" stroke="#56697a" stroke-width="1"/><path d="M1.5 1.8h10" stroke="#56697a" stroke-width="1.4"/><path d="M3.5 5.5h6M3 7.5h7M3 9.5h7" stroke="#56697a" stroke-width="1.1" stroke-dasharray="1 .5"/></svg>
<div class="t" style="left:895px;top:361px;width:181px;text-align:right;font-size:13px;color:#1e2a3a">4</div>
<div class="t" style="left:1079px;top:361px;width:180px;text-align:right;font-size:13px;color:#1e2a3a">999</div>
<div class="t" style="left:1262px;top:361px;width:201px;text-align:right;font-size:13px;color:#1e2a3a">5</div>
<div class="t" style="left:1466px;top:361px;width:200px;text-align:right;font-size:13px;color:#1e2a3a">1.6</div>
<svg style="left:1677px;top:365px" width="6" height="4"><path d="M0 0h6L3 3.5z" fill="#7a8694"/></svg>
<div class="t" style="left:1687px;top:361px;width:211px;text-align:center;font-size:13px;color:#1e2a3a">Y</div>
<svg style="left:344px;top:384px" width="16" height="16"><rect width="16" height="16" fill="#e6e6e6"/><path d="M4 8l3.5 3.5L13 4.5" fill="none" stroke="#d4d4d4" stroke-width="1.2"/></svg>
<div class="t" style="left:381px;top:386px;width:104px;text-align:center;font-size:13px;color:#1e2a3a">5</div>
<div class="t" style="left:485px;top:386px;width:203px;text-align:center;font-size:12px;color:#1e2a3a">관리비</div>
<div class="t" style="left:688px;top:386px;width:68px;text-align:right;font-size:13px;color:#1e2a3a">2004.10</div>
<svg style="left:776px;top:386px" width="13" height="13" viewBox="0 0 13 13"><path d="M1.5 2.5h10v9h-10z" fill="none" stroke="#56697a" stroke-width="1"/><path d="M1.5 1.8h10" stroke="#56697a" stroke-width="1.4"/><path d="M3.5 5.5h6M3 7.5h7M3 9.5h7" stroke="#56697a" stroke-width="1.1" stroke-dasharray="1 .5"/></svg>
<div class="t" style="left:792px;top:386px;width:68px;text-align:right;font-size:13px;color:#1e2a3a">2050.12</div>
<svg style="left:879px;top:386px" width="13" height="13" viewBox="0 0 13 13"><path d="M1.5 2.5h10v9h-10z" fill="none" stroke="#56697a" stroke-width="1"/><path d="M1.5 1.8h10" stroke="#56697a" stroke-width="1.4"/><path d="M3.5 5.5h6M3 7.5h7M3 9.5h7" stroke="#56697a" stroke-width="1.1" stroke-dasharray="1 .5"/></svg>
<div class="t" style="left:895px;top:386px;width:181px;text-align:right;font-size:13px;color:#1e2a3a">0</div>
<div class="t" style="left:1079px;top:386px;width:180px;text-align:right;font-size:13px;color:#1e2a3a">0</div>
<div class="t" style="left:1262px;top:386px;width:201px;text-align:right;font-size:13px;color:#1e2a3a">2</div>
<div class="t" style="left:1466px;top:386px;width:200px;text-align:right;font-size:13px;color:#1e2a3a">0</div>
<svg style="left:1677px;top:390px" width="6" height="4"><path d="M0 0h6L3 3.5z" fill="#7a8694"/></svg>
<div class="t" style="left:1687px;top:386px;width:211px;text-align:center;font-size:13px;color:#1e2a3a">Y</div>
<svg style="left:344px;top:409px" width="16" height="16"><rect width="16" height="16" fill="#e6e6e6"/><path d="M4 8l3.5 3.5L13 4.5" fill="none" stroke="#d4d4d4" stroke-width="1.2"/></svg>
<div class="t" style="left:381px;top:411px;width:104px;text-align:center;font-size:13px;color:#1e2a3a">6</div>
<div class="t" style="left:485px;top:411px;width:203px;text-align:center;font-size:12px;color:#1e2a3a">관리비</div>
<div class="t" style="left:688px;top:411px;width:68px;text-align:right;font-size:13px;color:#1e2a3a">2004.10</div>
<svg style="left:776px;top:411px" width="13" height="13" viewBox="0 0 13 13"><path d="M1.5 2.5h10v9h-10z" fill="none" stroke="#56697a" stroke-width="1"/><path d="M1.5 1.8h10" stroke="#56697a" stroke-width="1.4"/><path d="M3.5 5.5h6M3 7.5h7M3 9.5h7" stroke="#56697a" stroke-width="1.1" stroke-dasharray="1 .5"/></svg>
<div class="t" style="left:792px;top:411px;width:68px;text-align:right;font-size:13px;color:#1e2a3a">2050.12</div>
<svg style="left:879px;top:411px" width="13" height="13" viewBox="0 0 13 13"><path d="M1.5 2.5h10v9h-10z" fill="none" stroke="#56697a" stroke-width="1"/><path d="M1.5 1.8h10" stroke="#56697a" stroke-width="1.4"/><path d="M3.5 5.5h6M3 7.5h7M3 9.5h7" stroke="#56697a" stroke-width="1.1" stroke-dasharray="1 .5"/></svg>
<div class="t" style="left:895px;top:411px;width:181px;text-align:right;font-size:13px;color:#1e2a3a">1</div>
<div class="t" style="left:1079px;top:411px;width:180px;text-align:right;font-size:13px;color:#1e2a3a">2</div>
<div class="t" style="left:1262px;top:411px;width:201px;text-align:right;font-size:13px;color:#1e2a3a">2</div>
<div class="t" style="left:1466px;top:411px;width:200px;text-align:right;font-size:13px;color:#1e2a3a">0</div>
<svg style="left:1677px;top:415px" width="6" height="4"><path d="M0 0h6L3 3.5z" fill="#7a8694"/></svg>
<div class="t" style="left:1687px;top:411px;width:211px;text-align:center;font-size:13px;color:#1e2a3a">Y</div>
<svg style="left:344px;top:434px" width="16" height="16"><rect width="16" height="16" fill="#e6e6e6"/><path d="M4 8l3.5 3.5L13 4.5" fill="none" stroke="#d4d4d4" stroke-width="1.2"/></svg>
<div class="t" style="left:381px;top:436px;width:104px;text-align:center;font-size:13px;color:#1e2a3a">7</div>
<div class="t" style="left:485px;top:436px;width:203px;text-align:center;font-size:12px;color:#1e2a3a">관리비</div>
<div class="t" style="left:688px;top:436px;width:68px;text-align:right;font-size:13px;color:#1e2a3a">2004.10</div>
<svg style="left:776px;top:436px" width="13" height="13" viewBox="0 0 13 13"><path d="M1.5 2.5h10v9h-10z" fill="none" stroke="#56697a" stroke-width="1"/><path d="M1.5 1.8h10" stroke="#56697a" stroke-width="1.4"/><path d="M3.5 5.5h6M3 7.5h7M3 9.5h7" stroke="#56697a" stroke-width="1.1" stroke-dasharray="1 .5"/></svg>
<div class="t" style="left:792px;top:436px;width:68px;text-align:right;font-size:13px;color:#1e2a3a">2050.12</div>
<svg style="left:879px;top:436px" width="13" height="13" viewBox="0 0 13 13"><path d="M1.5 2.5h10v9h-10z" fill="none" stroke="#56697a" stroke-width="1"/><path d="M1.5 1.8h10" stroke="#56697a" stroke-width="1.4"/><path d="M3.5 5.5h6M3 7.5h7M3 9.5h7" stroke="#56697a" stroke-width="1.1" stroke-dasharray="1 .5"/></svg>
<div class="t" style="left:895px;top:436px;width:181px;text-align:right;font-size:13px;color:#1e2a3a">3</div>
<div class="t" style="left:1079px;top:436px;width:180px;text-align:right;font-size:13px;color:#1e2a3a">4</div>
<div class="t" style="left:1262px;top:436px;width:201px;text-align:right;font-size:13px;color:#1e2a3a">5</div>
<div class="t" style="left:1466px;top:436px;width:200px;text-align:right;font-size:13px;color:#1e2a3a">0</div>
<svg style="left:1677px;top:440px" width="6" height="4"><path d="M0 0h6L3 3.5z" fill="#7a8694"/></svg>
<div class="t" style="left:1687px;top:436px;width:211px;text-align:center;font-size:13px;color:#1e2a3a">Y</div>
<svg style="left:344px;top:459px" width="16" height="16"><rect width="16" height="16" fill="#e6e6e6"/><path d="M4 8l3.5 3.5L13 4.5" fill="none" stroke="#d4d4d4" stroke-width="1.2"/></svg>
<div class="t" style="left:381px;top:461px;width:104px;text-align:center;font-size:13px;color:#1e2a3a">8</div>
<div class="t" style="left:485px;top:461px;width:203px;text-align:center;font-size:12px;color:#1e2a3a">관리비</div>
<div class="t" style="left:688px;top:461px;width:68px;text-align:right;font-size:13px;color:#1e2a3a">2004.10</div>
<svg style="left:776px;top:461px" width="13" height="13" viewBox="0 0 13 13"><path d="M1.5 2.5h10v9h-10z" fill="none" stroke="#56697a" stroke-width="1"/><path d="M1.5 1.8h10" stroke="#56697a" stroke-width="1.4"/><path d="M3.5 5.5h6M3 7.5h7M3 9.5h7" stroke="#56697a" stroke-width="1.1" stroke-dasharray="1 .5"/></svg>
<div class="t" style="left:792px;top:461px;width:68px;text-align:right;font-size:13px;color:#1e2a3a">2050.12</div>
<svg style="left:879px;top:461px" width="13" height="13" viewBox="0 0 13 13"><path d="M1.5 2.5h10v9h-10z" fill="none" stroke="#56697a" stroke-width="1"/><path d="M1.5 1.8h10" stroke="#56697a" stroke-width="1.4"/><path d="M3.5 5.5h6M3 7.5h7M3 9.5h7" stroke="#56697a" stroke-width="1.1" stroke-dasharray="1 .5"/></svg>
<div class="t" style="left:895px;top:461px;width:181px;text-align:right;font-size:13px;color:#1e2a3a">5</div>
<div class="t" style="left:1079px;top:461px;width:180px;text-align:right;font-size:13px;color:#1e2a3a">8</div>
<div class="t" style="left:1262px;top:461px;width:201px;text-align:right;font-size:13px;color:#1e2a3a">10</div>
<div class="t" style="left:1466px;top:461px;width:200px;text-align:right;font-size:13px;color:#1e2a3a">0</div>
<svg style="left:1677px;top:465px" width="6" height="4"><path d="M0 0h6L3 3.5z" fill="#7a8694"/></svg>
<div class="t" style="left:1687px;top:461px;width:211px;text-align:center;font-size:13px;color:#1e2a3a">Y</div>
<svg style="left:344px;top:484px" width="16" height="16"><rect width="16" height="16" fill="#e6e6e6"/><path d="M4 8l3.5 3.5L13 4.5" fill="none" stroke="#d4d4d4" stroke-width="1.2"/></svg>
<div class="t" style="left:381px;top:486px;width:104px;text-align:center;font-size:13px;color:#1e2a3a">9</div>
<div class="t" style="left:485px;top:486px;width:203px;text-align:center;font-size:12px;color:#1e2a3a">관리비</div>
<div class="t" style="left:688px;top:486px;width:68px;text-align:right;font-size:13px;color:#1e2a3a">2004.10</div>
<svg style="left:776px;top:486px" width="13" height="13" viewBox="0 0 13 13"><path d="M1.5 2.5h10v9h-10z" fill="none" stroke="#56697a" stroke-width="1"/><path d="M1.5 1.8h10" stroke="#56697a" stroke-width="1.4"/><path d="M3.5 5.5h6M3 7.5h7M3 9.5h7" stroke="#56697a" stroke-width="1.1" stroke-dasharray="1 .5"/></svg>
<div class="t" style="left:792px;top:486px;width:68px;text-align:right;font-size:13px;color:#1e2a3a">2050.12</div>
<svg style="left:879px;top:486px" width="13" height="13" viewBox="0 0 13 13"><path d="M1.5 2.5h10v9h-10z" fill="none" stroke="#56697a" stroke-width="1"/><path d="M1.5 1.8h10" stroke="#56697a" stroke-width="1.4"/><path d="M3.5 5.5h6M3 7.5h7M3 9.5h7" stroke="#56697a" stroke-width="1.1" stroke-dasharray="1 .5"/></svg>
<div class="t" style="left:895px;top:486px;width:181px;text-align:right;font-size:13px;color:#1e2a3a">9</div>
<div class="t" style="left:1079px;top:486px;width:180px;text-align:right;font-size:13px;color:#1e2a3a">12</div>
<div class="t" style="left:1262px;top:486px;width:201px;text-align:right;font-size:13px;color:#1e2a3a">15</div>
<div class="t" style="left:1466px;top:486px;width:200px;text-align:right;font-size:13px;color:#1e2a3a">0</div>
<svg style="left:1677px;top:490px" width="6" height="4"><path d="M0 0h6L3 3.5z" fill="#7a8694"/></svg>
<div class="t" style="left:1687px;top:486px;width:211px;text-align:center;font-size:13px;color:#1e2a3a">Y</div>
<svg style="left:344px;top:509px" width="16" height="16"><rect width="16" height="16" fill="#e6e6e6"/><path d="M4 8l3.5 3.5L13 4.5" fill="none" stroke="#d4d4d4" stroke-width="1.2"/></svg>
<div class="t" style="left:381px;top:511px;width:104px;text-align:center;font-size:13px;color:#1e2a3a">10</div>
<div class="t" style="left:485px;top:511px;width:203px;text-align:center;font-size:12px;color:#1e2a3a">관리비</div>
<div class="t" style="left:688px;top:511px;width:68px;text-align:right;font-size:13px;color:#1e2a3a">2004.10</div>
<svg style="left:776px;top:511px" width="13" height="13" viewBox="0 0 13 13"><path d="M1.5 2.5h10v9h-10z" fill="none" stroke="#56697a" stroke-width="1"/><path d="M1.5 1.8h10" stroke="#56697a" stroke-width="1.4"/><path d="M3.5 5.5h6M3 7.5h7M3 9.5h7" stroke="#56697a" stroke-width="1.1" stroke-dasharray="1 .5"/></svg>
<div class="t" style="left:792px;top:511px;width:68px;text-align:right;font-size:13px;color:#1e2a3a">2050.12</div>
<svg style="left:879px;top:511px" width="13" height="13" viewBox="0 0 13 13"><path d="M1.5 2.5h10v9h-10z" fill="none" stroke="#56697a" stroke-width="1"/><path d="M1.5 1.8h10" stroke="#56697a" stroke-width="1.4"/><path d="M3.5 5.5h6M3 7.5h7M3 9.5h7" stroke="#56697a" stroke-width="1.1" stroke-dasharray="1 .5"/></svg>
<div class="t" style="left:895px;top:511px;width:181px;text-align:right;font-size:13px;color:#1e2a3a">13</div>
<div class="t" style="left:1079px;top:511px;width:180px;text-align:right;font-size:13px;color:#1e2a3a">999</div>
<div class="t" style="left:1262px;top:511px;width:201px;text-align:right;font-size:13px;color:#1e2a3a">20</div>
<div class="t" style="left:1466px;top:511px;width:200px;text-align:right;font-size:13px;color:#1e2a3a">0</div>
<svg style="left:1677px;top:515px" width="6" height="4"><path d="M0 0h6L3 3.5z" fill="#7a8694"/></svg>
<div class="t" style="left:1687px;top:511px;width:211px;text-align:center;font-size:13px;color:#1e2a3a">Y</div>
<div class="a" style="left:381px;top:279px;width:1px;height:250px;background:#c9ccd6"></div>
<div class="a" style="left:485px;top:279px;width:1px;height:250px;background:#c9ccd6"></div>
<div class="a" style="left:688px;top:279px;width:1px;height:250px;background:#c9ccd6"></div>
<div class="a" style="left:792px;top:279px;width:1px;height:250px;background:#c9ccd6"></div>
<div class="a" style="left:895px;top:279px;width:1px;height:250px;background:#c9ccd6"></div>
<div class="a" style="left:1079px;top:279px;width:1px;height:250px;background:#c9ccd6"></div>
<div class="a" style="left:1262px;top:279px;width:1px;height:250px;background:#c9ccd6"></div>
<div class="a" style="left:1466px;top:279px;width:1px;height:250px;background:#c9ccd6"></div>
<div class="a" style="left:1669px;top:279px;width:1px;height:250px;background:#c9ccd6"></div>
<div class="a" style="left:322px;top:529px;width:1576px;height:1px;background:#c0c4cc"></div>
<div class="a" style="left:322px;top:530px;width:1576px;height:1px;background:#c8ccd4"></div>
<div class="a" style="left:381px;top:279px;width:1518px;height:26px;border-top:1px solid #5fb0b8;border-bottom:1px solid #5fb0b8;border-right:1px solid #5fb0b8"></div>
<div class="a" style="left:321px;top:278px;width:62px;height:28px;border:2px solid #5fa9b0"></div>
<div class="a" style="left:280px;top:1040px;width:1640px;height:40px;background:#fff;border-top:1px solid #d6d6d6"></div>
<svg style="left:295px;top:1043px" width="36" height="36" viewBox="0 0 36 36"><defs><linearGradient id="ig" x1="0" y1="0" x2="0" y2="1"><stop offset="0" stop-color="#bfe3f8"/><stop offset=".45" stop-color="#3aa3e8"/><stop offset="1" stop-color="#1a86d6"/></linearGradient></defs><circle cx="18" cy="18" r="17.4" fill="#f2f2f6" stroke="#d0d0d8" stroke-width=".6"/><circle cx="18" cy="18" r="15.2" fill="none" stroke="#4b3f8c" stroke-width="2.8" stroke-dasharray="1.6 .7"/><circle cx="18" cy="18" r="13" fill="url(#ig)"/><rect x="12" y="9.5" width="12" height="17" rx="3" fill="#4a7fc8" opacity=".45"/><text x="18" y="21" font-size="7.6" font-weight="bold" fill="#fff" text-anchor="middle" font-family="Liberation Sans">ISMS</text><circle cx="3.5" cy="17.5" r=".8" fill="#d33"/><circle cx="32.5" cy="17.5" r=".8" fill="#d33"/></svg>
<div class="t" style="left:339px;top:1054px;font-size:12px;color:#555">서울시 금천구 가산디지털2로 98 IT캐슬 2동 714호 ©AegisEnterprise Corp.</div>
<div class="a" style="left:1335px;top:1011px;width:220px;height:32px;background:#333;border-radius:16px"></div>
<svg style="left:1507px;top:1042px" width="16" height="7"><path d="M0 0h16L8 6.5z" fill="#333"/></svg>
<svg style="left:1349px;top:1020px" width="14" height="14" viewBox="0 0 14 14"><path d="M7 1.5c-2.5 0-4 2-4 4.5v3L1.8 11h10.4L11 9V6c0-2.5-1.5-4.5-4-4.5z" fill="#f5b400"/><circle cx="7" cy="12.3" r="1.3" fill="#f5b400"/></svg>
<div class="t" style="left:1368px;top:1022px;font-size:11.5px;color:#fff">읽지 않은 공문을 확인하세요!</div>
<svg style="left:1530px;top:1023px" width="9" height="9"><path d="M1 1l7 7M8 1L1 8" stroke="#fff" stroke-width="1.3"/></svg>
<div class="a" style="left:1413px;top:1046px;width:161px;height:30px;background:#f0f2f5;border-radius:15px"></div>
<svg style="left:1435px;top:1053px" width="17" height="17" viewBox="0 0 17 17"><path d="M1 6h15v10H1z" fill="#d9262a"/><path d="M3 2h11v5H3z" fill="#eee" stroke="#ccc" stroke-width=".5"/><text x="8.5" y="14.5" font-size="6" font-weight="bold" font-style="italic" fill="#fff" text-anchor="middle" font-family="Liberation Sans">Xp</text></svg>
<div class="t" style="left:1458px;top:1056px;font-size:11.5px;color:#444">수신 문서</div>
<div class="t" style="left:1511px;top:1054px;font-size:15px;font-weight:bold;color:#d9262a">2</div>
<div class="t" style="left:1522px;top:1056px;font-size:11.5px;color:#444">건</div>
<div class="a" style="left:1545px;top:1049px;width:24px;height:24px;background:#fff;border-radius:50%"></div>
<svg style="left:1550px;top:1054px" width="14" height="14" viewBox="0 0 14 14"><path d="M11.5 7A4.5 4.5 0 1 1 7 2.5h3" fill="none" stroke="#222" stroke-width="1.6"/><path d="M9 0l3 2.5L9 5z" fill="#222"/></svg>
<div class="t" style="left:1598px;top:1055px;font-size:12px;font-weight:bold;color:#222">개인정보처리방침</div>
<div class="t" style="left:1703px;top:1055px;font-size:12px;color:#333">이용약관</div>
<div class="a" style="left:1765px;top:1046px;width:140px;height:30px;background:#fff;border:1px solid #555;border-radius:3px"></div>
<div class="t" style="left:1776px;top:1056px;font-size:11.8px;color:#111">관련사이트</div>
<svg style="left:1882px;top:1055px" width="13" height="8"><path d="M1 7l5.5-5.5L12 7" fill="none" stroke="#222" stroke-width="1.3"/></svg>
</body></html>
